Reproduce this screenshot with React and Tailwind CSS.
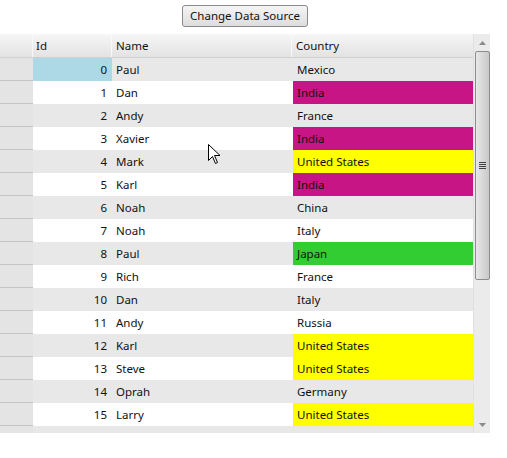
import React from "react";

const rows = [
  [0, "Paul", "Mexico", ""],
  [1, "Dan", "India", "v"],
  [2, "Andy", "France", ""],
  [3, "Xavier", "India", "v"],
  [4, "Mark", "United States", "y"],
  [5, "Karl", "India", "v"],
  [6, "Noah", "China", ""],
  [7, "Noah", "Italy", ""],
  [8, "Paul", "Japan", "g"],
  [9, "Rich", "France", ""],
  [10, "Dan", "Italy", ""],
  [11, "Andy", "Russia", ""],
  [12, "Karl", "United States", "y"],
  [13, "Steve", "United States", "y"],
  [14, "Oprah", "Germany", ""],
  [15, "Larry", "United States", "y"],
  [16, "Steve", "France", ""],
];

function countryBg(c, even) {
  if (c === "v") return "bg-[#c71585]";
  if (c === "y") return "bg-[#ffff00]";
  if (c === "g") return "bg-[#32cd32]";
  return even ? "bg-[#e8e8e8]" : "bg-white";
}

export default function App() {
  return (
    <div
      className="relative w-[507px] h-[458px] bg-white text-[11.5px] text-[#111] overflow-hidden"
      style={{ fontFamily: '"Segoe UI", "Noto Sans", "Open Sans", sans-serif' }}
    >
      <div className="w-[490px] flex justify-center pt-[5px]">
        <button className="h-[22px] w-[126px] rounded-[3px] border border-[#8a8a8a] bg-gradient-to-b from-[#f5f5f5] to-[#dddddd] leading-[20px] text-[11.5px]">
          Change Data Source
        </button>
      </div>
      <div className="mt-[7px] w-[490px] h-[399px] flex overflow-hidden">
        <div className="w-[473px] flex flex-col">
          <div className="flex h-[24px] shrink-0 bg-gradient-to-b from-[#f6f6f6] to-[#e3e3e3] border-b border-[#d0d0d0]">
            <div className="w-[33px] border-r border-[#f8f8f8]" />
            <div className="w-[79px] pl-[3px] leading-[24px] border-r border-[#f8f8f8]">Id</div>
            <div className="w-[180px] pl-[4px] leading-[24px] border-r border-[#f8f8f8]">Name</div>
            <div className="w-[181px] pl-[4px] leading-[24px]">Country</div>
          </div>
          {rows.map(([id, name, country, c]) => {
            const even = id % 2 === 0;
            const rowBg = even ? "bg-[#e8e8e8]" : "bg-white";
            return (
              <div key={id} className="flex h-[23px] shrink-0 leading-[24px]">
                <div className="w-[33px] bg-[#e4e4e4] border-b border-[#c4c4c4]" />
                <div
                  className={`w-[79px] pr-[5px] text-right ${id === 0 ? "bg-[#add8e6]" : rowBg}`}
                >
                  {id}
                </div>
                <div className={`w-[180px] pl-[4px] ${rowBg}`}>{name}</div>
                <div className={`w-[181px] flex ${rowBg}`}>
                  <div className={`w-[180px] pl-[4px] ml-[1px] ${countryBg(c, even)}`}>{country}</div>
                </div>
              </div>
            );
          })}
        </div>
        <div className="w-[17px] h-full bg-[#ebebeb] border-l border-[#e0e0e0] flex flex-col items-center">
          <div className="h-[17px] w-full flex items-center justify-center">
            <svg width="7" height="4" viewBox="0 0 7 4">
              <path d="M0 4 L3.5 0 L7 4 Z" fill="#8a8a8a" />
            </svg>
          </div>
          <div className="w-[15px] h-[229px] rounded-[2px] border border-[#8c8c8c] bg-gradient-to-r from-[#e8e8e8] via-[#d8d8d8] to-[#c8c8c8] flex items-center justify-center">
            <div className="flex flex-col gap-[1px]">
              <div className="w-[7px] h-[1px] bg-[#444]" />
              <div className="w-[7px] h-[1px] bg-[#444]" />
              <div className="w-[7px] h-[1px] bg-[#444]" />
              <div className="w-[7px] h-[1px] bg-[#444]" />
            </div>
          </div>
          <div className="flex-1" />
          <div className="h-[17px] w-full flex items-center justify-center">
            <svg width="7" height="4" viewBox="0 0 7 4">
              <path d="M0 0 L3.5 4 L7 0 Z" fill="#8a8a8a" />
            </svg>
          </div>
        </div>
      </div>
      <svg
        className="absolute left-[208px] top-[144px]"
        width="13"
        height="21"
        viewBox="0 0 13 21"
      >
        <path
          d="M0.5 0.5 L0.5 16.5 L4.5 12.5 L7.5 19.5 L9.5 18.5 L6.5 11.5 L12 11.5 Z"
          fill="white"
          stroke="black"
          strokeWidth="1"
          strokeLinejoin="miter"
        />
      </svg>
    </div>
  );
}
